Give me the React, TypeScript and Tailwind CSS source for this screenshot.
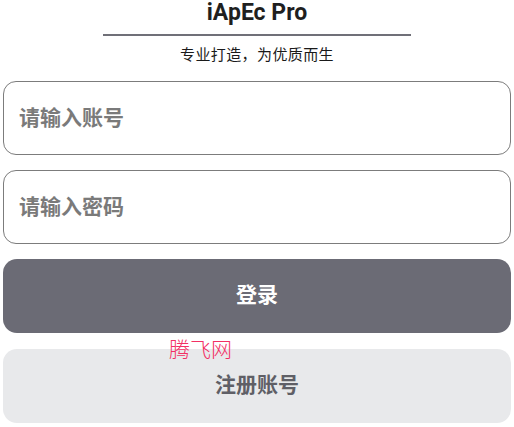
import React, { useState } from "react";

export default function App() {
  const [account, setAccount] = useState("");
  const [password, setPassword] = useState("");

  return (
    <div
      className="relative w-[514px] h-[427px] bg-white px-[3px] flex flex-col overflow-hidden"
      style={{ fontFamily: 'Roboto, "Noto Sans CJK SC", sans-serif' }}
    >
      {/* Header */}
      <div className="flex flex-col items-center">
        <h1 className="text-[23px] leading-[26px] font-bold text-[#1f1f1f]">iApEc Pro</h1>
        <div className="mt-[8px] w-[308px] h-[2px] bg-[#707078]" />
        <p className="mt-[9px] text-[15px] leading-[20px] tracking-[0.4px] text-[#1a1a1a]">专业打造，为优质而生</p>
      </div>

      {/* Form */}
      <div className="mt-[16px] flex flex-col gap-[15px]">
        <input
          value={account}
          onChange={(e) => setAccount(e.target.value)}
          placeholder="请输入账号"
          className="h-[74px] w-full rounded-[13px] border border-[#7c7c7c] px-[15px] text-[21px] font-semibold text-[#333] placeholder:text-[#7a7a7a] outline-none"
        />
        <input
          type="password"
          value={password}
          onChange={(e) => setPassword(e.target.value)}
          placeholder="请输入密码"
          className="h-[74px] w-full rounded-[13px] border border-[#7c7c7c] px-[15px] text-[21px] font-semibold text-[#333] placeholder:text-[#7a7a7a] outline-none"
        />
        <button className="h-[74px] w-full rounded-[14px] bg-[#6b6b75] text-white text-[21px] font-bold">
          登录
        </button>
        <button className="mt-[1px] h-[74px] w-full rounded-[14px] bg-[#e8e9eb] text-[#5f5f66] text-[21px] font-semibold">
          注册账号
        </button>
      </div>

      {/* Watermark */}
      <span
        className="absolute left-[169px] top-[335px] text-[21px] leading-[26px] text-[#f23064] pointer-events-none"
        style={{ fontFamily: '"Noto Sans CJK SC", sans-serif', fontWeight: 300 }}
      >
        腾飞网
      </span>
    </div>
  );
}
